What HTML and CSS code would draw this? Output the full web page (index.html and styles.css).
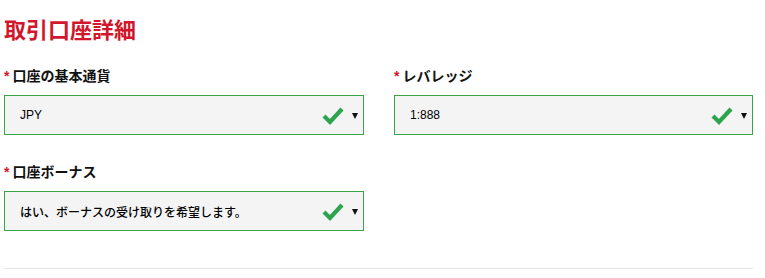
FILE: index.html
```html
<!DOCTYPE html>
<html lang="ja">
<head>
<meta charset="utf-8">
<title>取引口座詳細</title>
<link rel="stylesheet" href="styles.css">
</head>
<body>
<div class="page">
  <h1 class="title">取引口座詳細</h1>
  <div class="grid">
    <div class="field">
      <div class="label"><span class="req">*</span>口座の基本通貨</div>
      <div class="select">
        <span class="value">JPY</span>
        <svg class="check" width="22" height="20" viewBox="0 0 22 20"><polyline points="2,10 8,16 20,3" fill="none" stroke="#2ea44f" stroke-width="4.2" stroke-linecap="butt" stroke-linejoin="miter"/></svg>
        <span class="arrow"></span>
      </div>
    </div>
    <div class="field">
      <div class="label"><span class="req">*</span>レバレッジ</div>
      <div class="select">
        <span class="value">1:888</span>
        <svg class="check" width="22" height="20" viewBox="0 0 22 20"><polyline points="2,10 8,16 20,3" fill="none" stroke="#2ea44f" stroke-width="4.2" stroke-linecap="butt" stroke-linejoin="miter"/></svg>
        <span class="arrow"></span>
      </div>
    </div>
    <div class="field">
      <div class="label"><span class="req">*</span>口座ボーナス</div>
      <div class="select">
        <span class="value">はい、ボーナスの受け取りを希望します。</span>
        <svg class="check" width="22" height="20" viewBox="0 0 22 20"><polyline points="2,10 8,16 20,3" fill="none" stroke="#2ea44f" stroke-width="4.2" stroke-linecap="butt" stroke-linejoin="miter"/></svg>
        <span class="arrow"></span>
      </div>
    </div>
  </div>
  <div class="rule"></div>
</div>
</body>
</html>
```

FILE: styles.css
```css
html, body {
  margin: 0;
  padding: 0;
  background: #ffffff;
}
body {
  font-family: "Liberation Sans", "Noto Sans CJK JP", sans-serif;
  color: #111111;
}
.page {
  width: 749px;
  padding-left: 4px;
  padding-top: 16px;
}
.title {
  margin: 0 0 20px 0;
  font-size: 22px;
  line-height: 30px;
  font-weight: bold;
  color: #d2172c;
}
.grid {
  display: grid;
  grid-template-columns: 360px 359px;
  column-gap: 30px;
  row-gap: 27px;
}
.label {
  font-size: 14px;
  line-height: 20px;
  font-weight: bold;
  margin-bottom: 9px;
  white-space: nowrap;
}
.req {
  color: #d2172c;
  font-weight: bold;
  margin-right: 3px;
}
.select {
  box-sizing: border-box;
  height: 40px;
  border: 1px solid #3aa447;
  background: #f4f4f4;
  display: flex;
  align-items: center;
  padding: 0 5px 0 15px;
}
.value {
  flex: 1;
  font-size: 12px;
  font-weight: 500;
  color: #000000;
  white-space: nowrap;
}
.check {
  display: block;
  margin-right: 8px;
  margin-top: 1px;
}
.arrow {
  width: 0;
  height: 0;
  border-left: 3.5px solid transparent;
  border-right: 3.5px solid transparent;
  border-top: 6px solid #111111;
  margin-top: 1px;
}
.rule {
  margin-top: 37px;
  height: 1px;
  background: #e6e6e6;
}
```
